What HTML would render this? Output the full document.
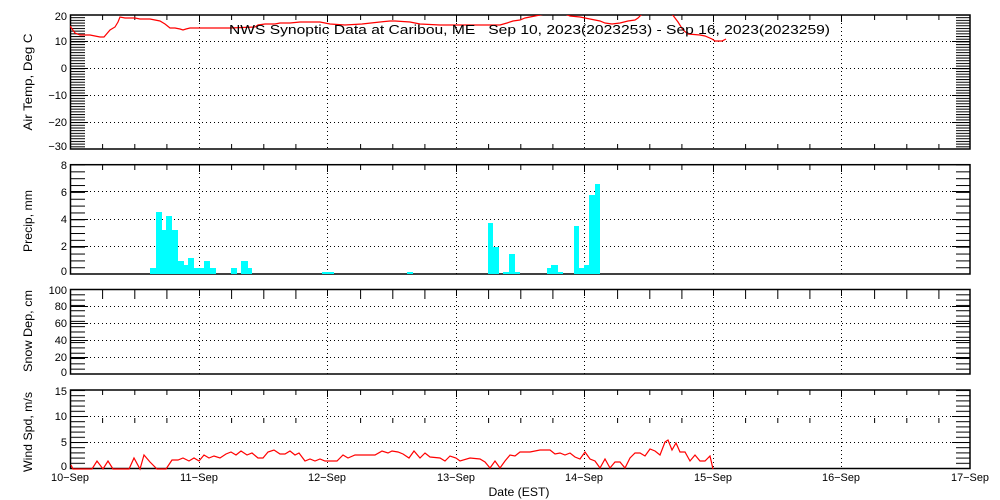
<!DOCTYPE html>
<html><head><meta charset="utf-8"><style>
html,body{margin:0;padding:0;background:#fff;}
svg{display:block;}
text{font-family:"Liberation Sans",sans-serif;fill:#000;}
.pre{white-space:pre;}
</style></head><body>
<svg width="1000" height="500" viewBox="0 0 1000 500" xmlns="http://www.w3.org/2000/svg">
<defs>
<pattern id="p1" x="0" y="14.5" width="20" height="2.69" patternUnits="userSpaceOnUse"><rect x="0" y="0" width="20" height="1" fill="#000"/></pattern>
<pattern id="p2" x="0" y="164.5" width="20" height="6.85" patternUnits="userSpaceOnUse"><rect x="0" y="0" width="20" height="1" fill="#000"/></pattern>
<pattern id="p3" x="0" y="289" width="20" height="5.31" patternUnits="userSpaceOnUse"><rect x="0" y="0" width="20" height="1" fill="#000"/></pattern>
<pattern id="p4" x="0" y="390" width="20" height="5.2" patternUnits="userSpaceOnUse"><rect x="0" y="0" width="20" height="1" fill="#000"/></pattern>
<clipPath id="c1"><rect x="70" y="15" width="900" height="134"/></clipPath>
</defs>

<rect x="71" y="15" width="14" height="134" fill="url(#p1)"/>
<rect x="956" y="15" width="14" height="134" fill="url(#p1)"/>
<rect x="71" y="165" width="14" height="109" fill="url(#p2)"/>
<rect x="956" y="165" width="14" height="109" fill="url(#p2)"/>
<rect x="71" y="289" width="14" height="85" fill="url(#p3)"/>
<rect x="956" y="289" width="14" height="85" fill="url(#p3)"/>
<rect x="71" y="390" width="14" height="79" fill="url(#p4)"/>
<rect x="956" y="390" width="14" height="79" fill="url(#p4)"/>

<g stroke="#000" stroke-width="1" stroke-dasharray="1,3" fill="none">
<path d="M199.5 15V149M327.5 15V149M456.5 15V149M584.5 15V149M713.5 15V149M841.5 15V149"/>
<path d="M199.5 165V274M327.5 165V274M456.5 165V274M584.5 165V274M713.5 165V274M841.5 165V274"/>
<path d="M199.5 289V374M327.5 289V374M456.5 289V374M584.5 289V374M713.5 289V374M841.5 289V374"/>
<path d="M199.5 390V469M327.5 390V469M456.5 390V469M584.5 390V469M713.5 390V469M841.5 390V469"/>
<path d="M70 41.5H970M70 68.5H970M70 95.5H970M70 122.5H970"/>
<path d="M70 191.5H970M70 219.5H970M70 246.5H970"/>
<path d="M70 306.5H970M70 323.5H970M70 340.5H970M70 357.5H970"/>
<path d="M70 416.5H970M70 442.5H970"/>
</g>

<g stroke="#000" stroke-width="1">
<path d="M70 41.5H88M70 68.5H88M70 95.5H88M70 122.5H88M952 41.5H970M952 68.5H970M952 95.5H970M952 122.5H970"/>
<path d="M70 191.5H88M70 219.5H88M70 246.5H88M952 191.5H970M952 219.5H970M952 246.5H970"/>
<path d="M70 306.5H88M70 323.5H88M70 340.5H88M70 357.5H88M952 306.5H970M952 323.5H970M952 340.5H970M952 357.5H970"/>
<path d="M70 416.5H88M70 442.5H88M952 416.5H970M952 442.5H970"/>
</g>

<g stroke="#000" stroke-width="1" id="xt">
<path d="M102.6 15v5M134.8 15v5M166.9 15v5M231.6 15v5M263.8 15v5M295.9 15v5M360.6 15v5M392.8 15v5M424.9 15v5M488.6 15v5M520.8 15v5M552.9 15v5M617.6 15v5M649.8 15v5M681.9 15v5M745.6 15v5M777.8 15v5M809.9 15v5M874.6 15v5M906.8 15v5M938.9 15v5M199.5 15v7M327.5 15v7M456.5 15v7M584.5 15v7M713.5 15v7M841.5 15v7"/>
<path d="M102.6 149v-5M134.8 149v-5M166.9 149v-5M231.6 149v-5M263.8 149v-5M295.9 149v-5M360.6 149v-5M392.8 149v-5M424.9 149v-5M488.6 149v-5M520.8 149v-5M552.9 149v-5M617.6 149v-5M649.8 149v-5M681.9 149v-5M745.6 149v-5M777.8 149v-5M809.9 149v-5M874.6 149v-5M906.8 149v-5M938.9 149v-5"/>
</g>
<use href="#xt" y="150"/>
<use href="#xt" y="274"/>
<use href="#xt" y="375"/>

<g stroke="#000" stroke-width="1.5" fill="none">
<rect x="70.5" y="15" width="899.5" height="134"/>
<rect x="70.5" y="164.7" width="899.5" height="109.3"/>
<rect x="70.5" y="289.5" width="899.5" height="84.5"/>
<rect x="70.5" y="390" width="899.5" height="78.5"/>
</g>

<g fill="#00ffff">
<rect x="150" y="268" width="6" height="6"/>
<rect x="156" y="212" width="6" height="62"/>
<rect x="162" y="230" width="4" height="44"/>
<rect x="166" y="216" width="6" height="58"/>
<rect x="172" y="230" width="6" height="44"/>
<rect x="178" y="261" width="6" height="13"/>
<rect x="184" y="265" width="4" height="9"/>
<rect x="188" y="258" width="6" height="16"/>
<rect x="194" y="268" width="10" height="6"/>
<rect x="204" y="261" width="6" height="13"/>
<rect x="210" y="268" width="6" height="6"/>
<rect x="231" y="268" width="6" height="6"/>
<rect x="241" y="261" width="7" height="13"/>
<rect x="248" y="268" width="4" height="6"/>
<rect x="322" y="272" width="12" height="2"/>
<rect x="407" y="272" width="6" height="2"/>
<rect x="488" y="223" width="5" height="51"/>
<rect x="493" y="247" width="6" height="27"/>
<rect x="503" y="272" width="6" height="2"/>
<rect x="509" y="254" width="6" height="20"/>
<rect x="515" y="272" width="5" height="2"/>
<rect x="547" y="268" width="4" height="6"/>
<rect x="551" y="265" width="7" height="9"/>
<rect x="558" y="272" width="5" height="2"/>
<rect x="574" y="226" width="5" height="48"/>
<rect x="579" y="268" width="5" height="6"/>
<rect x="584" y="265" width="5" height="9"/>
<rect x="589" y="195" width="6" height="79"/>
<rect x="595" y="184" width="5" height="90"/>
</g>

<polyline clip-path="url(#c1)" fill="none" stroke="#f00" stroke-width="1.2" points="70,26 75,33 80,35 90,35 95,36 100,37 104,37 110,30 115,27 118,22 120,17 125,18 135,18 140,19 150,19 160,21 165,24 170,28 175,28 180,29 183,30 186,29 190,28 230,28 255,27 258,25 265,24 275,24 280,23 290,23 300,22 320,22 330,24 345,25 362,24 380,22 390,21 395,21 410,22 420,24 440,25 455,25 469,25 500,25 507,23 513,21 520,20 525,18 530,17 535,16 545,14 565,14 570,16 580,17 590,19 600,21 605,23 612,24 620,23 628,21 635,20 638,18 642,14 672,14 678,22 683,30 688,34 700,35 705,36 712,39 715,41 722,41 726,39"/>

<polyline fill="none" stroke="#f00" stroke-width="1.2" points="71,465 73,469 92,469 97,461 103,469 108,461 113,469 129,469 134,458 140,469 144,455 150,462 157,469 166,469 172,460 178,460 183,458 189,461 194,458 199,461 204,455 209,458 214,456 220,458 226,454 231,452 236,455 241,451 247,455 252,453 258,458 263,458 268,452 274,450 280,454 285,454 290,451 295,455 299,453 305,461 310,459 315,461 320,459 325,461 337,461 343,455 348,458 355,455 375,455 382,451 388,453 392,451 398,452 403,454 409,458 414,451 420,458 425,453 430,457 440,458 445,461 450,456 456,458 460,461 470,458 480,459 485,462 490,468 495,461 500,468 505,461 510,455 515,456 520,452 530,452 540,450 550,450 555,454 560,453 565,455 570,453 575,457 580,459 585,452 590,459 595,461 600,468 605,459 610,468 615,462 620,462 625,468 630,458 635,453 640,453 645,456 650,449 655,451 660,455 665,442 668,440 672,450 676,443 680,452 685,452 690,461 695,455 700,461 705,461 710,456 713,469"/>

<text class="pre" x="229" y="34" font-size="12.5" textLength="601" lengthAdjust="spacingAndGlyphs">NWS Synoptic Data at Caribou, ME   Sep 10, 2023(2023253) - Sep 16, 2023(2023259)</text>

<g font-size="11" text-anchor="end">
<text x="67" y="20">20</text><text x="67" y="45">10</text><text x="67" y="72">0</text><text x="67" y="99">−10</text><text x="67" y="126">−20</text><text x="67" y="150">−30</text>
<text x="67" y="169">8</text><text x="67" y="196">6</text><text x="67" y="223">4</text><text x="67" y="250">2</text><text x="67" y="275">0</text>
<text x="67" y="294">100</text><text x="67" y="310">80</text><text x="67" y="327">60</text><text x="67" y="344">40</text><text x="67" y="361">20</text><text x="67" y="376">0</text>
<text x="67" y="395">15</text><text x="67" y="420">10</text><text x="67" y="446">5</text><text x="67" y="470">0</text>
</g>

<g font-size="12" text-anchor="middle">
<text transform="translate(32,82) rotate(-90)" textLength="97" lengthAdjust="spacingAndGlyphs">Air Temp, Deg C</text>
<text transform="translate(32,221) rotate(-90)" textLength="62" lengthAdjust="spacingAndGlyphs">Precip, mm</text>
<text transform="translate(32,331) rotate(-90)" textLength="82" lengthAdjust="spacingAndGlyphs">Snow Dep, cm</text>
<text transform="translate(32,432) rotate(-90)" textLength="80" lengthAdjust="spacingAndGlyphs">Wind Spd, m/s</text>
</g>

<g font-size="11" text-anchor="middle">
<text x="70" y="481" textLength="38" lengthAdjust="spacingAndGlyphs">10−Sep</text>
<text x="199" y="481" textLength="38" lengthAdjust="spacingAndGlyphs">11−Sep</text>
<text x="327" y="481" textLength="38" lengthAdjust="spacingAndGlyphs">12−Sep</text>
<text x="456" y="481" textLength="38" lengthAdjust="spacingAndGlyphs">13−Sep</text>
<text x="584" y="481" textLength="38" lengthAdjust="spacingAndGlyphs">14−Sep</text>
<text x="713" y="481" textLength="38" lengthAdjust="spacingAndGlyphs">15−Sep</text>
<text x="841" y="481" textLength="38" lengthAdjust="spacingAndGlyphs">16−Sep</text>
<text x="970" y="481" textLength="38" lengthAdjust="spacingAndGlyphs">17−Sep</text>
<text x="519" y="496" font-size="12" textLength="61" lengthAdjust="spacingAndGlyphs">Date (EST)</text>
</g>
</svg>
</body></html>
